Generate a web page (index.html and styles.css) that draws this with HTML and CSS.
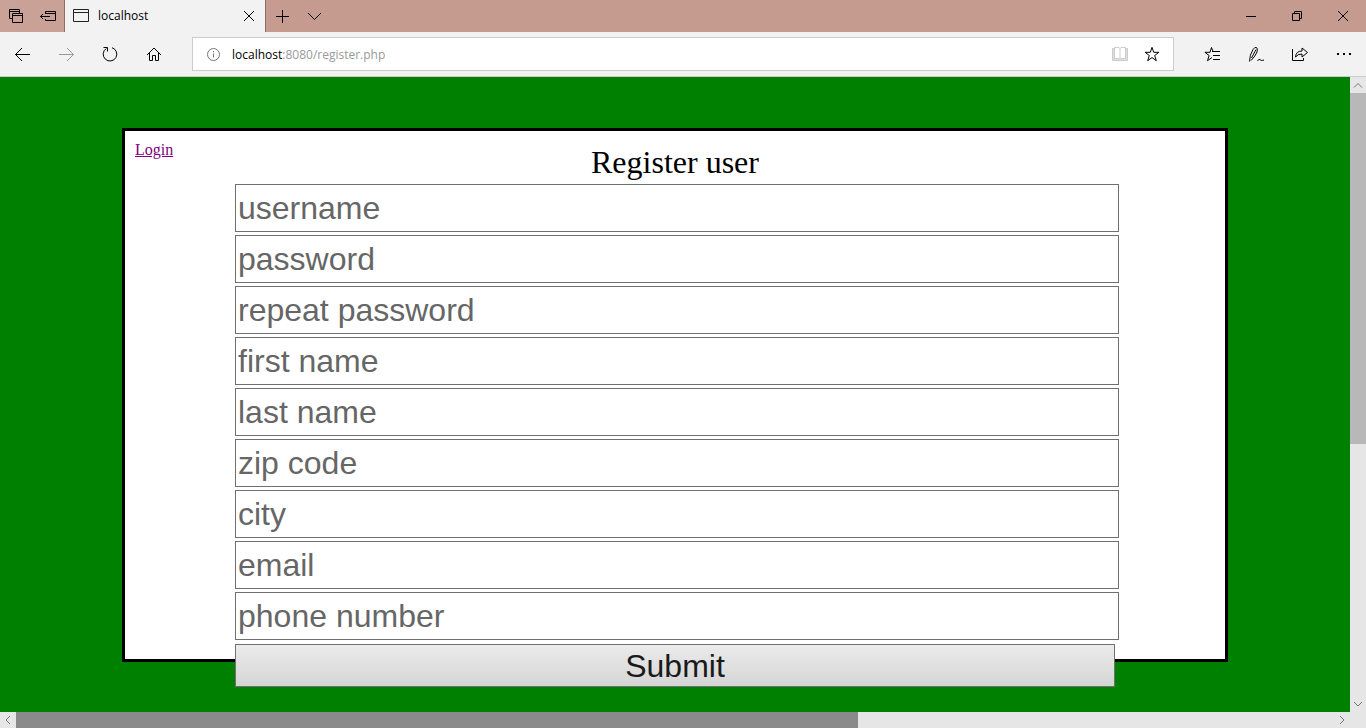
FILE: index.html
```html
<!DOCTYPE html>
<html lang="en">
<head>
<meta charset="utf-8">
<title>localhost</title>
<link rel="stylesheet" href="styles.css">
</head>
<body>
<div class="browser">
  <header class="titlebar">
    <button class="btn btn-sm" aria-label="Tabs you've set aside"><svg class="icon" viewBox="0 0 16 16"><path d="M4 10.500H1.500v-9h10V5M1.500 3.500h10M4.500 5.500h10v9h-10zM4.500 7.500h10"/></svg></button>
    <button class="btn btn-sm" aria-label="Set these tabs aside"><svg class="icon" viewBox="0 0 16 16"><path d="M5.500 6V3.500h10v9h-10V11M5.500 5.500h10M.5 8.500H10M3 6L.5 8.500 3 11"/></svg></button>
    <div class="tab">
      <svg class="icon tab-icon" viewBox="0 0 16 16"><path d="M.5 1.500h15v12H.5zM.5 4.500h15"/></svg>
      <span class="tab-title">localhost</span>
      <button class="btn btn-sm" aria-label="Close tab"><svg class="icon" viewBox="0 0 16 16"><path d="M3 3l10 10M13 3L3 13"/></svg></button>
    </div>
    <button class="btn btn-sm" aria-label="New tab"><svg class="icon" viewBox="0 0 16 16"><path d="M8.500 2v13M2 8.500h13"/></svg></button>
    <button class="btn btn-sm" aria-label="Show tab previews"><svg class="icon" viewBox="0 0 16 16"><path d="M2 5l6.500 6.500L15 5"/></svg></button>
    <div class="window-controls">
      <button class="btn btn-lg" aria-label="Minimize"><svg class="icon" viewBox="0 0 16 16"><path d="M3 8.500h10"/></svg></button>
      <button class="btn btn-lg" aria-label="Restore"><svg class="icon" viewBox="0 0 16 16"><path d="M3.500 5.500h7v7h-7zM5.500 5.500v-2h7v7h-2"/></svg></button>
      <button class="btn btn-lg" aria-label="Close"><svg class="icon" viewBox="0 0 16 16"><path d="M3 3l10 10M13 3L3 13"/></svg></button>
    </div>
  </header>

  <nav class="toolbar" aria-label="Browser toolbar">
    <button class="btn btn-md" aria-label="Back"><svg class="icon" viewBox="0 0 16 16"><path d="M16 8.500H1.500M8 2L1.500 8.500 8 15"/></svg></button>
    <button class="btn btn-md btn-off" aria-label="Forward" disabled><svg class="icon" viewBox="0 0 16 16"><path d="M1 8.500h14.500M9 2l6.500 6.500L9 15"/></svg></button>
    <button class="btn btn-md" aria-label="Refresh"><svg class="icon" viewBox="0 0 16 16"><path d="M10 1.700A6.800 6.800 0 1 1 4.300 2.500M1.500 1.500h4v4"/></svg></button>
    <button class="btn btn-md" aria-label="Home"><svg class="icon" viewBox="0 0 16 16"><path d="M1 9l7-7 7 7M3.500 7v7.500h3v-5h3v5h3V7"/></svg></button>
    <div class="address">
      <svg class="icon info" viewBox="0 0 16 16"><circle cx="8.500" cy="8.500" r="6"/><path d="M8.500 7.500v4M8.500 5v1.300"/></svg>
      <a class="url" href="#"><span class="host">localhost</span>:8080/register.php</a>
      <button class="btn btn-sm btn-pale" aria-label="Reading view"><svg class="icon" viewBox="0 0 16 16"><path class="cover" d="M.5 2.500h15v12H.5z"/><path class="page" d="M2.500 1.500H7l1 1 1-1h4.500v11H9l-1 1-1-1H2.500zM8 2.500v11"/></svg></button>
      <button class="btn btn-sm" aria-label="Add to favorites"><svg class="icon" viewBox="0 0 16 16"><path d="M8 1.300l1.700 5h5.200l-4.200 3.200 1.600 5.200L8 11.500l-4.300 3.200 1.600-5.200-4.200-3.200h5.200z"/></svg></button>
    </div>
    <button class="btn btn-md" aria-label="Hub"><svg class="icon" viewBox="0 0 16 16"><path d="M10.500 5.500H9L7.500 1.500 6 6.300H.9l4.200 3.200-1.600 5.200L8 11.500M8 5.500h8M9 9.500h7M9 13.500h7"/></svg></button>
    <button class="btn btn-md" aria-label="Add notes"><svg class="icon" viewBox="0 0 16 16"><path d="M1.500 15.500Q1.500 9 5 3.500 7 .5 8.500 1.500T9 6Q7.500 10 3 14.500M3.500 12L8 3.500M9.500 15q1.500-2.500 2.500-1.500t1.800 1 2.200-.5"/></svg></button>
    <button class="btn btn-md" aria-label="Share"><svg class="icon" viewBox="0 0 16 16"><path d="M.5 3v11.500h11V12M3.500 11Q4 5 10 5V2l5.500 4.500L10 11V8Q6 7.800 3.500 11z"/></svg></button>
    <button class="btn btn-md" aria-label="Settings and more"><svg class="icon dots" viewBox="0 0 16 16"><path d="M1 7h2v2H1zM7 7h2v2H7zM13 7h2v2h-2z"/></svg></button>
  </nav>

  <div class="viewport">
    <main class="page-body">
      <section class="card">
        <div class="card-head">
          <a class="login" href="#">Login</a>
          <h1 class="heading">Register user</h1>
        </div>
        <form class="form">
          <input class="field" type="text" placeholder="username" aria-label="username">
          <input class="field" type="password" placeholder="password" aria-label="password">
          <input class="field" type="password" placeholder="repeat password" aria-label="repeat password">
          <input class="field" type="text" placeholder="first name" aria-label="first name">
          <input class="field" type="text" placeholder="last name" aria-label="last name">
          <input class="field" type="text" placeholder="zip code" aria-label="zip code">
          <input class="field" type="text" placeholder="city" aria-label="city">
          <input class="field" type="email" placeholder="email" aria-label="email">
          <input class="field" type="tel" placeholder="phone number" aria-label="phone number">
          <button class="submit" type="submit">Submit</button>
        </form>
      </section>
    </main>
    <div class="vscroll">
      <svg class="icon" viewBox="0 0 16 16"><path d="M4 10.500l4-4 4 4"/></svg>
      <div class="track"><div class="thumb-v"></div></div>
      <svg class="icon" viewBox="0 0 16 16"><path d="M4 6l4 4 4-4"/></svg>
    </div>
  </div>
  <div class="hscroll">
    <svg class="icon" viewBox="0 0 16 16"><path d="M10 4L6 8l4 4"/></svg>
    <div class="track"><div class="thumb-h"></div></div>
    <svg class="icon" viewBox="0 0 16 16"><path d="M6 4l4 4-4 4"/></svg>
    <div class="corner"></div>
  </div>
</div>
</body>
</html>
```

FILE: styles.css
```css
* {
  box-sizing: border-box;
}

body {
  margin: 0;
  font-family: "Liberation Serif", "Times New Roman", serif;
}

.browser {
  display: flex;
  flex-direction: column;
  height: 100vh;
  overflow: hidden;
}

.icon {
  display: block;
  flex: none;
  width: 16px;
  height: 16px;
  fill: none;
  stroke: currentColor;
  stroke-width: 1;
}

.btn {
  display: flex;
  flex: none;
  align-items: center;
  justify-content: center;
  height: 32px;
  padding: 0;
  border: 0;
  background: none;
  color: #000;
}

.btn-sm { width: 32px; }
.btn-md { width: 44px; }
.btn-lg { width: 46px; }
.btn-off { color: #999; }
.btn-pale { color: #ccc; }

.cover {
  fill: #ddd;
}

.page {
  fill: #fff;
}

.dots {
  fill: currentColor;
  stroke: none;
}

.titlebar {
  display: flex;
  flex: none;
  height: 32px;
  background: linear-gradient(90deg, #caa297, #c69b8f 300px);
}

.tab {
  display: flex;
  align-items: center;
  width: 202px;
  padding-left: 8px;
  border: solid #8d6e66;
  border-width: 0 1px;
  background: #f2f2f2;
  font: 12px/16px "Open Sans", "Noto Sans", sans-serif;
}

.tab-icon {
  color: #222;
}

.tab-title {
  flex: 1;
  padding-left: 9px;
}

.window-controls {
  display: flex;
  margin-left: auto;
}

.toolbar {
  display: flex;
  flex: none;
  align-items: center;
  height: 45px;
  border-bottom: 1px solid #ccc;
  background: #f2f2f2;
}

.address {
  display: flex;
  flex: 1;
  align-items: center;
  height: 34px;
  margin: 0 16px;
  padding: 0 5px 0 12px;
  border: 1px solid #ccc;
  background: #fff;
}

.info {
  color: #777;
}

.url {
  flex: 1;
  padding: 2px 0 0 11px;
  color: #999;
  font: 12px/16px "Open Sans", "Noto Sans", sans-serif;
  text-decoration: none;
}

.host {
  color: #000;
}

.viewport {
  display: flex;
  flex: 1;
  min-height: 0;
}

.page-body {
  flex: 1;
  padding: 51px 122px 0;
  overflow: hidden;
  background: #008000;
}

.card {
  border: 3px solid #000;
  background: #fff;
}

.card-head {
  display: grid;
  grid-template-columns: 1fr auto 1fr;
  padding: 10px 10px 0;
}

.login {
  justify-self: start;
  align-self: start;
  color: #800080;
  font-size: 16px;
  line-height: 18px;
}

.heading {
  margin: 3px 0 4px;
  font-size: 32px;
  font-weight: 400;
  line-height: 36px;
}

.form {
  display: flex;
  flex-direction: column;
  gap: 3px;
  width: 80%;
  margin: 0 auto -28px;
}

.field {
  width: calc(100% + 4px);
  height: 48px;
  padding: 0 2px;
  border: 1px solid #707070;
  border-radius: 0;
  background: #fff;
  font: 32px/36px "Liberation Sans", Arial, sans-serif;
}

.field::placeholder {
  color: #666;
  opacity: 1;
}

.submit {
  width: 100%;
  height: 43px;
  margin-top: 1px;
  padding: 0;
  border: 1px solid #707070;
  border-radius: 0;
  background: linear-gradient(#ebebeb, #d5d5d5);
  color: #1a1a1a;
  font: 32px/36px "Liberation Sans", Arial, sans-serif;
}

.vscroll,
.hscroll {
  display: flex;
  flex: none;
  background: #e6e6e6;
  color: #777;
}

.vscroll {
  flex-direction: column;
  width: 16px;
}

.track {
  flex: 1;
}

.thumb-v {
  height: 58.2%;
  background: #b8b8b8;
}

.thumb-h {
  width: 63.9%;
  height: 16px;
  background: #8a8a8a;
}

.corner {
  width: 16px;
}
```
